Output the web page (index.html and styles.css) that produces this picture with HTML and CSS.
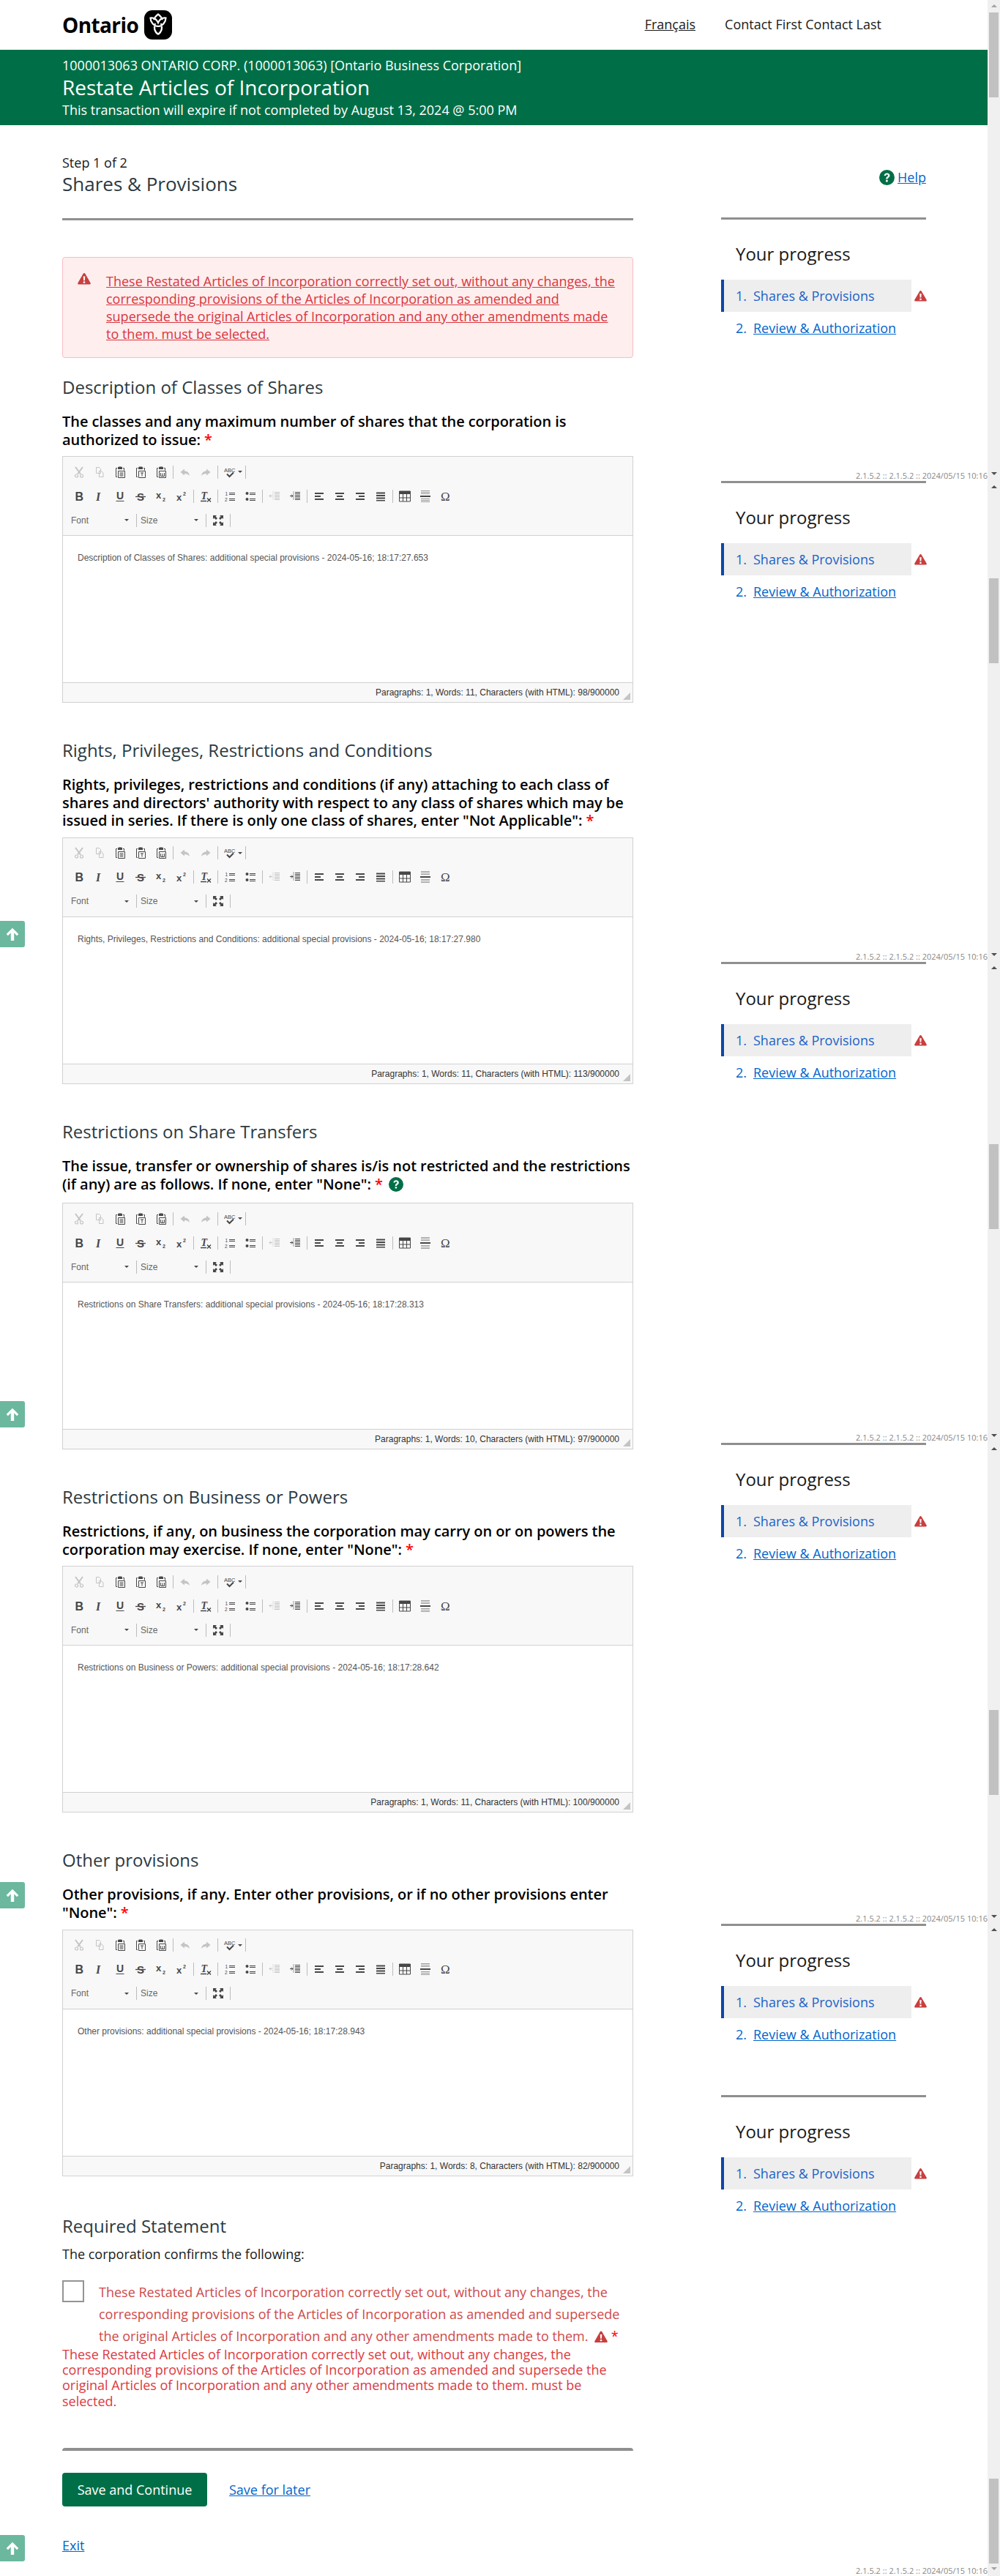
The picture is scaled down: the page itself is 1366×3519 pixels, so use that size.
FILE: index.html
```html
<!DOCTYPE html>
<html lang="en">

<head>
    <meta charset="UTF-8">
    <meta name="viewport" content="width=device-width, initial-scale=1.0">
    <title>Restate Articles of Incorporation</title>
    <link rel="stylesheet" href="styles.css">
</head>

<body>
    <!-- shared icons -->
    <svg class="sprite" aria-hidden="true">
        <symbol id="i-warn" viewBox="0 0 18 16">
            <path d="M9 .5c.6 0 1 .3 1.3.8l7.3 12.6c.6 1-.1 2.1-1.3 2.1H1.7C.5 16-.2 14.900.4 13.900L7.700 1.300C8 .8 8.400.5 9 .5z" fill="#c93f3f" />
            <path d="M7.700 5h2.600l-.4 5.700H8.100zM7.800 12h2.400v2.300H7.800z" fill="#fff" />
        </symbol>
        <symbol id="i-help" viewBox="0 0 20 20">
            <circle cx="10" cy="10" r="10" fill="#006f47" />
            <path d="M6.400 7.600C6.500 5.500 8 4.300 10.100 4.300c2.200 0 3.700 1.300 3.700 3.100 0 1.500-.8 2.200-1.900 3-.7.500-.9.800-.9 1.600H8.800c0-1.500.4-2.200 1.400-2.900.8-.6 1.200-1 1.200-1.600 0-.7-.5-1.200-1.300-1.200-.9 0-1.400.5-1.500 1.300zM8.700 13.200h2.400v2.400H8.700z" fill="#fff" />
        </symbol>
        <symbol id="i-up" viewBox="0 0 18 18">
            <path d="M9 1.500l7.500 7.500-2 2L11 7.500V17H7V7.500L3.500 11l-2-2z" fill="#fff" />
        </symbol>

        <symbol id="t-cut" viewBox="0 0 16 16">
            <path d="M3 1l7 9.500M13 1L6 10.500" stroke="currentColor" stroke-width="2" fill="none" />
            <circle cx="4.500" cy="13" r="2" fill="none" stroke="currentColor" stroke-width="1.200" />
            <circle cx="11.500" cy="13" r="2" fill="none" stroke="currentColor" stroke-width="1.200" />
        </symbol>
        <symbol id="t-copy" viewBox="0 0 16 16">
            <path d="M3.500 1.500h4l2 2v6h-6zM7.500 6.500h3l2.500 2.500v5.500H7.500z" fill="#f7f7f7" stroke="currentColor" />
        </symbol>
        <symbol id="t-paste" viewBox="0 0 16 16">
            <path d="M4 2.500H2.500v12H4M12 2.500h1.500v3" fill="none" stroke="currentColor" />
            <path d="M5 1.500c0-.8 1.200-1 3-1s3 .2 3 1V4H5z" fill="currentColor" />
            <path d="M5.500 6.500h9v9h-9zM7.500 9h5M7.500 11h5M7.500 13h5" fill="none" stroke="currentColor" />
        </symbol>
        <symbol id="t-paste-text" viewBox="0 0 16 16">
            <path d="M4 2.500H2.500v12H4M12 2.500h1.500v3" fill="none" stroke="currentColor" />
            <path d="M5 1.500c0-.8 1.200-1 3-1s3 .2 3 1V4H5z" fill="currentColor" />
            <path d="M5.500 6.500h9v9h-9zM8 9h4M10 9v4.500" fill="none" stroke="currentColor" />
        </symbol>
        <symbol id="t-paste-word" viewBox="0 0 16 16">
            <path d="M4 2.500H2.500v12H4M12 2.500h1.500v3" fill="none" stroke="currentColor" />
            <path d="M5 1.500c0-.8 1.200-1 3-1s3 .2 3 1V4H5z" fill="currentColor" />
            <path d="M5.500 6.500h9v9h-9zM7.500 9v4.500h5V9M10 9.500v4" fill="none" stroke="currentColor" />
        </symbol>
        <symbol id="t-undo" viewBox="0 0 16 16">
            <path d="M7 3.500L1.500 8 7 12.500V10c3 0 5 .8 7 3-.5-4-3-6.500-7-6.800z" fill="currentColor" />
        </symbol>
        <symbol id="t-redo" viewBox="0 0 16 16">
            <path d="M9 3.500L14.500 8 9 12.500V10c-3 0-5 .8-7 3 .5-4 3-6.500 7-6.800z" fill="currentColor" />
        </symbol>
        <symbol id="t-spell" viewBox="0 0 16 16">
            <text class="tb-glyph" x="0" y="7.500" font-size="7.500">ABC</text>
            <path d="M4 10.500l3.500 3.500 5.500-5.500" fill="none" stroke="currentColor" stroke-width="2" />
        </symbol>
        <symbol id="t-bold" viewBox="0 0 16 16">
            <text class="tb-glyph" x="2.500" y="14" font-size="16" font-weight="700">B</text>
        </symbol>
        <symbol id="t-italic" viewBox="0 0 16 16">
            <text class="tb-glyph tb-glyph-serif" x="3" y="14" font-size="16" font-weight="700" font-style="italic">I</text>
        </symbol>
        <symbol id="t-underline" viewBox="0 0 16 16">
            <text class="tb-glyph" x="3" y="12" font-size="14" font-weight="700">U</text>
            <path d="M2.500 14.500h11" stroke="currentColor" />
        </symbol>
        <symbol id="t-strike" viewBox="0 0 16 16">
            <text class="tb-glyph" x="3" y="14" font-size="15" font-weight="700">S</text>
            <path d="M1 8.500h14" stroke="currentColor" stroke-width="1.300" />
        </symbol>
        <symbol id="t-sub" viewBox="0 0 16 16">
            <text class="tb-glyph" x="1" y="11" font-size="13" font-weight="700">x</text>
            <text class="tb-glyph" x="10" y="15" font-size="7" font-weight="700">2</text>
        </symbol>
        <symbol id="t-sup" viewBox="0 0 16 16">
            <text class="tb-glyph" x="1" y="14" font-size="13" font-weight="700">x</text>
            <text class="tb-glyph" x="10" y="7" font-size="7" font-weight="700">2</text>
        </symbol>
        <symbol id="t-remove" viewBox="0 0 16 16">
            <text class="tb-glyph tb-glyph-serif" x="1.500" y="12" font-size="14" font-weight="700" font-style="italic">T</text>
            <path d="M1 14.500h8M10 10.500l5 5M15 10.500l-5 5" stroke="currentColor" stroke-width="1.400" />
        </symbol>
        <symbol id="t-ol" viewBox="0 0 16 16">
            <path d="M7 3.500h8M7 5.500h8M7 11.500h8M7 13.500h8" stroke="currentColor" />
            <text class="tb-glyph" x="1.500" y="7" font-size="6.500">1</text>
            <text class="tb-glyph" x="1" y="14.500" font-size="6.500">2</text>
        </symbol>
        <symbol id="t-ul" viewBox="0 0 16 16">
            <circle cx="3.500" cy="4" r="2" fill="currentColor" />
            <circle cx="3.500" cy="12" r="2" fill="currentColor" />
            <path d="M7 3.500h8M7 5.500h8M7 11.500h8M7 13.500h8" stroke="currentColor" />
        </symbol>
        <symbol id="t-outdent" viewBox="0 0 16 16">
            <path d="M8 2.500h7M8 4.500h7M8 6.500h7M8 8.500h7M8 10.500h7M8 12.500h7" stroke="currentColor" />
            <path d="M6 1.500v12" stroke="currentColor" stroke-dasharray="1 1" />
            <path d="M5 7.500H1M3 5.500l-2 2 2 2" stroke="currentColor" fill="none" />
        </symbol>
        <symbol id="t-indent" viewBox="0 0 16 16">
            <path d="M8 2.500h7M8 4.500h7M8 6.500h7M8 8.500h7M8 10.500h7M8 12.500h7" stroke="currentColor" />
            <path d="M6 1.500v12" stroke="currentColor" stroke-dasharray="1 1" />
            <path d="M1 7.500h4M3 5.500l2 2-2 2" stroke="currentColor" fill="none" />
        </symbol>
        <symbol id="t-left" viewBox="0 0 16 16">
            <path d="M2 3h12v2H2zM2 7h8v2H2zM2 11h12v2H2z" fill="currentColor" />
        </symbol>
        <symbol id="t-center" viewBox="0 0 16 16">
            <path d="M2 3h12v2H2zM4 7h8v2H4zM2 11h12v2H2z" fill="currentColor" />
        </symbol>
        <symbol id="t-right" viewBox="0 0 16 16">
            <path d="M2 3h12v2H2zM6 7h8v2H6zM2 11h12v2H2z" fill="currentColor" />
        </symbol>
        <symbol id="t-justify" viewBox="0 0 16 16">
            <path d="M2 2.500h12v2H2zM2 6h12v2H2zM2 9.500h12v2H2zM2 13h12v1.500H2z" fill="currentColor" />
        </symbol>
        <symbol id="t-table" viewBox="0 0 16 16">
            <path d="M.5 1h15v14H.5z" fill="none" stroke="currentColor" />
            <path d="M0 1h16v4H0z" fill="currentColor" />
            <path d="M5.500 5v10M10.500 5v10M0 10h16" stroke="currentColor" />
        </symbol>
        <symbol id="t-hr" viewBox="0 0 16 16">
            <path d="M2 .5h12M2 2.500h12M2 4.500h12M2 11.500h12M2 13.500h12M2 15.500h12" stroke="#999" />
            <path d="M1 7h14v2H1z" fill="currentColor" />
        </symbol>
        <symbol id="t-omega" viewBox="0 0 16 16">
            <text class="tb-glyph tb-glyph-serif" x="1" y="14" font-size="17">&#937;</text>
        </symbol>
        <symbol id="t-max" viewBox="0 0 16 16">
            <path d="M1 1h5L4.500 2.500 7 5 5 7 2.500 4.500 1 6zM15 1v5l-1.500-1.500L11 7 9 5l2.500-2.500L10 1zM1 15v-5l1.500 1.500L5 9l2 2-2.500 2.500L6 15zM15 15h-5l1.500-1.500L9 11l2-2 2.500 2.500L15 10z" fill="currentColor" />
        </symbol>
    </svg>

    <div class="viewport">
        <div class="site">
            <header class="site-header">
                <div class="logo">
                    <span class="logo-word">Ontario</span>
                    <svg class="logo-badge" viewBox="0 0 38 40">
                        <rect width="38" height="40" rx="11" fill="#000" />
                        <path d="M19 22C13 22 8.500 16 8.500 10.500 13 10 17 12.500 19 17c2-4.500 6-7 10.500-6.500C29.500 16 25 22 19 22zM19 33c-4-3-6.500-8-4-15M19 33c4-3 6.500-8 4-15M13 13c2-5 4-6 6-7.500 2 1.500 4 2.500 6 7.500" fill="none" stroke="#fff" stroke-width="2.200" />
                    </svg>
                </div>
                <nav class="site-nav">
                    <a href="#" class="lang-link">Français</a>
                    <span>Contact First Contact Last</span>
                </nav>
            </header>

            <div class="banner">
                <div class="banner-corp">1000013063 ONTARIO CORP. (1000013063) [Ontario Business Corporation]</div>
                <h1>Restate Articles of Incorporation</h1>
                <div class="banner-expiry">This transaction will expire if not completed by August 13, 2024 @ 5:00 PM</div>
            </div>

            <div class="layout">
                <main class="main-col">
                    <div class="step">Step 1 of 2</div>
                    <h2 class="step-title">Shares &amp; Provisions</h2>
                    <hr class="rule">

                    <div class="alert">
                        <svg class="alert-icon"><use href="#i-warn" /></svg>
                        <a href="#" class="alert-link">These Restated Articles of Incorporation correctly set out, without any changes, the corresponding provisions of the Articles of Incorporation as amended and supersede the original Articles of Incorporation and any other amendments made to them. must be selected.</a>
                    </div>

                    <section class="section">
                        <h3>Description of Classes of Shares</h3>
                        <label class="field-label">The classes and any maximum number of shares that the corporation is authorized to issue: <span class="req">*</span></label>
                        <div class="editor">
                            <div class="toolbar">
                                <div class="tb-row">
                                    <svg class="tb off"><use href="#t-cut" /></svg><svg class="tb off"><use href="#t-copy" /></svg><svg class="tb"><use href="#t-paste" /></svg><svg class="tb"><use href="#t-paste-text" /></svg><svg class="tb"><use href="#t-paste-word" /></svg><i class="tb-sep"></i>
                                    <svg class="tb off"><use href="#t-undo" /></svg><svg class="tb off"><use href="#t-redo" /></svg><i class="tb-sep"></i>
                                    <svg class="tb"><use href="#t-spell" /></svg><i class="tb-caret tb-caret-spell"></i><i class="tb-sep"></i>
                                </div>
                                <div class="tb-row">
                                    <svg class="tb"><use href="#t-bold" /></svg><svg class="tb"><use href="#t-italic" /></svg><svg class="tb"><use href="#t-underline" /></svg><svg class="tb"><use href="#t-strike" /></svg><svg class="tb"><use href="#t-sub" /></svg><svg class="tb"><use href="#t-sup" /></svg><i class="tb-sep"></i>
                                    <svg class="tb"><use href="#t-remove" /></svg><i class="tb-sep"></i>
                                    <svg class="tb"><use href="#t-ol" /></svg><svg class="tb"><use href="#t-ul" /></svg><i class="tb-sep"></i>
                                    <svg class="tb off"><use href="#t-outdent" /></svg><svg class="tb"><use href="#t-indent" /></svg><i class="tb-sep"></i>
                                    <svg class="tb"><use href="#t-left" /></svg><svg class="tb"><use href="#t-center" /></svg><svg class="tb"><use href="#t-right" /></svg><svg class="tb"><use href="#t-justify" /></svg><i class="tb-sep"></i>
                                    <svg class="tb"><use href="#t-table" /></svg><svg class="tb"><use href="#t-hr" /></svg><svg class="tb"><use href="#t-omega" /></svg>
                                </div>
                                <div class="tb-row">
                                    <span class="tb-combo">Font<i class="tb-caret"></i></span><i class="tb-sep"></i>
                                    <span class="tb-combo">Size<i class="tb-caret"></i></span><i class="tb-sep"></i>
                                    <svg class="tb"><use href="#t-max" /></svg><i class="tb-sep"></i>
                                </div>
                            </div>
                            <div class="editor-body">Description of Classes of Shares: additional special provisions - 2024-05-16; 18:17:27.653</div>
                            <div class="editor-status">Paragraphs: 1, Words: 11, Characters (with HTML): 98/900000<i class="resizer"></i></div>
                        </div>
                    </section>

                    <section class="section">
                        <h3>Rights, Privileges, Restrictions and Conditions</h3>
                        <label class="field-label">Rights, privileges, restrictions and conditions (if any) attaching to each class of shares and directors' authority with respect to any class of shares which may be issued in series. If there is only one class of shares, enter "Not Applicable": <span class="req">*</span></label>
                        <div class="editor">
                            <div class="toolbar">
                                <div class="tb-row">
                                    <svg class="tb off"><use href="#t-cut" /></svg><svg class="tb off"><use href="#t-copy" /></svg><svg class="tb"><use href="#t-paste" /></svg><svg class="tb"><use href="#t-paste-text" /></svg><svg class="tb"><use href="#t-paste-word" /></svg><i class="tb-sep"></i>
                                    <svg class="tb off"><use href="#t-undo" /></svg><svg class="tb off"><use href="#t-redo" /></svg><i class="tb-sep"></i>
                                    <svg class="tb"><use href="#t-spell" /></svg><i class="tb-caret tb-caret-spell"></i><i class="tb-sep"></i>
                                </div>
                                <div class="tb-row">
                                    <svg class="tb"><use href="#t-bold" /></svg><svg class="tb"><use href="#t-italic" /></svg><svg class="tb"><use href="#t-underline" /></svg><svg class="tb"><use href="#t-strike" /></svg><svg class="tb"><use href="#t-sub" /></svg><svg class="tb"><use href="#t-sup" /></svg><i class="tb-sep"></i>
                                    <svg class="tb"><use href="#t-remove" /></svg><i class="tb-sep"></i>
                                    <svg class="tb"><use href="#t-ol" /></svg><svg class="tb"><use href="#t-ul" /></svg><i class="tb-sep"></i>
                                    <svg class="tb off"><use href="#t-outdent" /></svg><svg class="tb"><use href="#t-indent" /></svg><i class="tb-sep"></i>
                                    <svg class="tb"><use href="#t-left" /></svg><svg class="tb"><use href="#t-center" /></svg><svg class="tb"><use href="#t-right" /></svg><svg class="tb"><use href="#t-justify" /></svg><i class="tb-sep"></i>
                                    <svg class="tb"><use href="#t-table" /></svg><svg class="tb"><use href="#t-hr" /></svg><svg class="tb"><use href="#t-omega" /></svg>
                                </div>
                                <div class="tb-row">
                                    <span class="tb-combo">Font<i class="tb-caret"></i></span><i class="tb-sep"></i>
                                    <span class="tb-combo">Size<i class="tb-caret"></i></span><i class="tb-sep"></i>
                                    <svg class="tb"><use href="#t-max" /></svg><i class="tb-sep"></i>
                                </div>
                            </div>
                            <div class="editor-body">Rights, Privileges, Restrictions and Conditions: additional special provisions - 2024-05-16; 18:17:27.980</div>
                            <div class="editor-status">Paragraphs: 1, Words: 11, Characters (with HTML): 113/900000<i class="resizer"></i></div>
                        </div>
                    </section>

                    <section class="section">
                        <h3>Restrictions on Share Transfers</h3>
                        <label class="field-label field-label-help">The issue, transfer or ownership of shares is/is not restricted and the restrictions (if any) are as follows. If none, enter "None": <span class="req">*</span> <svg class="label-help"><use href="#i-help" /></svg></label>
                        <div class="editor">
                            <div class="toolbar">
                                <div class="tb-row">
                                    <svg class="tb off"><use href="#t-cut" /></svg><svg class="tb off"><use href="#t-copy" /></svg><svg class="tb"><use href="#t-paste" /></svg><svg class="tb"><use href="#t-paste-text" /></svg><svg class="tb"><use href="#t-paste-word" /></svg><i class="tb-sep"></i>
                                    <svg class="tb off"><use href="#t-undo" /></svg><svg class="tb off"><use href="#t-redo" /></svg><i class="tb-sep"></i>
                                    <svg class="tb"><use href="#t-spell" /></svg><i class="tb-caret tb-caret-spell"></i><i class="tb-sep"></i>
                                </div>
                                <div class="tb-row">
                                    <svg class="tb"><use href="#t-bold" /></svg><svg class="tb"><use href="#t-italic" /></svg><svg class="tb"><use href="#t-underline" /></svg><svg class="tb"><use href="#t-strike" /></svg><svg class="tb"><use href="#t-sub" /></svg><svg class="tb"><use href="#t-sup" /></svg><i class="tb-sep"></i>
                                    <svg class="tb"><use href="#t-remove" /></svg><i class="tb-sep"></i>
                                    <svg class="tb"><use href="#t-ol" /></svg><svg class="tb"><use href="#t-ul" /></svg><i class="tb-sep"></i>
                                    <svg class="tb off"><use href="#t-outdent" /></svg><svg class="tb"><use href="#t-indent" /></svg><i class="tb-sep"></i>
                                    <svg class="tb"><use href="#t-left" /></svg><svg class="tb"><use href="#t-center" /></svg><svg class="tb"><use href="#t-right" /></svg><svg class="tb"><use href="#t-justify" /></svg><i class="tb-sep"></i>
                                    <svg class="tb"><use href="#t-table" /></svg><svg class="tb"><use href="#t-hr" /></svg><svg class="tb"><use href="#t-omega" /></svg>
                                </div>
                                <div class="tb-row">
                                    <span class="tb-combo">Font<i class="tb-caret"></i></span><i class="tb-sep"></i>
                                    <span class="tb-combo">Size<i class="tb-caret"></i></span><i class="tb-sep"></i>
                                    <svg class="tb"><use href="#t-max" /></svg><i class="tb-sep"></i>
                                </div>
                            </div>
                            <div class="editor-body">Restrictions on Share Transfers: additional special provisions - 2024-05-16; 18:17:28.313</div>
                            <div class="editor-status">Paragraphs: 1, Words: 10, Characters (with HTML): 97/900000<i class="resizer"></i></div>
                        </div>
                    </section>

                    <section class="section">
                        <h3>Restrictions on Business or Powers</h3>
                        <label class="field-label">Restrictions, if any, on business the corporation may carry on or on powers the corporation may exercise. If none, enter "None": <span class="req">*</span></label>
                        <div class="editor">
                            <div class="toolbar">
                                <div class="tb-row">
                                    <svg class="tb off"><use href="#t-cut" /></svg><svg class="tb off"><use href="#t-copy" /></svg><svg class="tb"><use href="#t-paste" /></svg><svg class="tb"><use href="#t-paste-text" /></svg><svg class="tb"><use href="#t-paste-word" /></svg><i class="tb-sep"></i>
                                    <svg class="tb off"><use href="#t-undo" /></svg><svg class="tb off"><use href="#t-redo" /></svg><i class="tb-sep"></i>
                                    <svg class="tb"><use href="#t-spell" /></svg><i class="tb-caret tb-caret-spell"></i><i class="tb-sep"></i>
                                </div>
                                <div class="tb-row">
                                    <svg class="tb"><use href="#t-bold" /></svg><svg class="tb"><use href="#t-italic" /></svg><svg class="tb"><use href="#t-underline" /></svg><svg class="tb"><use href="#t-strike" /></svg><svg class="tb"><use href="#t-sub" /></svg><svg class="tb"><use href="#t-sup" /></svg><i class="tb-sep"></i>
                                    <svg class="tb"><use href="#t-remove" /></svg><i class="tb-sep"></i>
                                    <svg class="tb"><use href="#t-ol" /></svg><svg class="tb"><use href="#t-ul" /></svg><i class="tb-sep"></i>
                                    <svg class="tb off"><use href="#t-outdent" /></svg><svg class="tb"><use href="#t-indent" /></svg><i class="tb-sep"></i>
                                    <svg class="tb"><use href="#t-left" /></svg><svg class="tb"><use href="#t-center" /></svg><svg class="tb"><use href="#t-right" /></svg><svg class="tb"><use href="#t-justify" /></svg><i class="tb-sep"></i>
                                    <svg class="tb"><use href="#t-table" /></svg><svg class="tb"><use href="#t-hr" /></svg><svg class="tb"><use href="#t-omega" /></svg>
                                </div>
                                <div class="tb-row">
                                    <span class="tb-combo">Font<i class="tb-caret"></i></span><i class="tb-sep"></i>
                                    <span class="tb-combo">Size<i class="tb-caret"></i></span><i class="tb-sep"></i>
                                    <svg class="tb"><use href="#t-max" /></svg><i class="tb-sep"></i>
                                </div>
                            </div>
                            <div class="editor-body">Restrictions on Business or Powers: additional special provisions - 2024-05-16; 18:17:28.642</div>
                            <div class="editor-status">Paragraphs: 1, Words: 11, Characters (with HTML): 100/900000<i class="resizer"></i></div>
                        </div>
                    </section>

                    <section class="section">
                        <h3>Other provisions</h3>
                        <label class="field-label">Other provisions, if any. Enter other provisions, or if no other provisions enter "None": <span class="req">*</span></label>
                        <div class="editor">
                            <div class="toolbar">
                                <div class="tb-row">
                                    <svg class="tb off"><use href="#t-cut" /></svg><svg class="tb off"><use href="#t-copy" /></svg><svg class="tb"><use href="#t-paste" /></svg><svg class="tb"><use href="#t-paste-text" /></svg><svg class="tb"><use href="#t-paste-word" /></svg><i class="tb-sep"></i>
                                    <svg class="tb off"><use href="#t-undo" /></svg><svg class="tb off"><use href="#t-redo" /></svg><i class="tb-sep"></i>
                                    <svg class="tb"><use href="#t-spell" /></svg><i class="tb-caret tb-caret-spell"></i><i class="tb-sep"></i>
                                </div>
                                <div class="tb-row">
                                    <svg class="tb"><use href="#t-bold" /></svg><svg class="tb"><use href="#t-italic" /></svg><svg class="tb"><use href="#t-underline" /></svg><svg class="tb"><use href="#t-strike" /></svg><svg class="tb"><use href="#t-sub" /></svg><svg class="tb"><use href="#t-sup" /></svg><i class="tb-sep"></i>
                                    <svg class="tb"><use href="#t-remove" /></svg><i class="tb-sep"></i>
                                    <svg class="tb"><use href="#t-ol" /></svg><svg class="tb"><use href="#t-ul" /></svg><i class="tb-sep"></i>
                                    <svg class="tb off"><use href="#t-outdent" /></svg><svg class="tb"><use href="#t-indent" /></svg><i class="tb-sep"></i>
                                    <svg class="tb"><use href="#t-left" /></svg><svg class="tb"><use href="#t-center" /></svg><svg class="tb"><use href="#t-right" /></svg><svg class="tb"><use href="#t-justify" /></svg><i class="tb-sep"></i>
                                    <svg class="tb"><use href="#t-table" /></svg><svg class="tb"><use href="#t-hr" /></svg><svg class="tb"><use href="#t-omega" /></svg>
                                </div>
                                <div class="tb-row">
                                    <span class="tb-combo">Font<i class="tb-caret"></i></span><i class="tb-sep"></i>
                                    <span class="tb-combo">Size<i class="tb-caret"></i></span><i class="tb-sep"></i>
                                    <svg class="tb"><use href="#t-max" /></svg><i class="tb-sep"></i>
                                </div>
                            </div>
                            <div class="editor-body">Other provisions: additional special provisions - 2024-05-16; 18:17:28.943</div>
                            <div class="editor-status">Paragraphs: 1, Words: 8, Characters (with HTML): 82/900000<i class="resizer"></i></div>
                        </div>
                    </section>

                    <section class="section section-required">
                        <h3>Required Statement</h3>
                        <p class="confirm-intro">The corporation confirms the following:</p>
                        <div class="confirm-row">
                            <span class="checkbox"></span>
                            <span class="confirm-text">These Restated Articles of Incorporation correctly set out, without any changes, the corresponding provisions of the Articles of Incorporation as amended and supersede the original Articles of Incorporation and any other amendments made to them. <svg class="inline-warn"><use href="#i-warn" /></svg> <span class="req">*</span></span>
                        </div>
                        <div class="field-error">These Restated Articles of Incorporation correctly set out, without any changes, the corresponding provisions of the Articles of Incorporation as amended and supersede the original Articles of Incorporation and any other amendments made to them. must be selected.</div>
                    </section>

                    <hr class="rule rule-end">

                    <div class="actions">
                        <button class="btn-primary">Save and Continue</button>
                        <a href="#">Save for later</a>
                    </div>
                    <a href="#" class="exit-link">Exit</a>
                </main>

                <aside class="side-col">
                    <div class="help-row">
                        <svg class="help-icon"><use href="#i-help" /></svg>
                        <a href="#">Help</a>
                    </div>

                    <div class="progress progress-a">
                        <hr class="rule side-rule">
                        <h2>Your progress</h2>
                        <div class="progress-item current"><span class="num">1.</span>Shares &amp; Provisions</div><svg class="progress-warn"><use href="#i-warn" /></svg>
                        <div class="progress-item"><span class="num">2.</span><a href="#">Review &amp; Authorization</a></div>
                        <div class="stamp">2.1.5.2 :: 2.1.5.2 :: 2024/05/15 10:16</div>
                    </div>
                    <div class="progress progress-b">
                        <hr class="rule side-rule">
                        <h2>Your progress</h2>
                        <div class="progress-item current"><span class="num">1.</span>Shares &amp; Provisions</div><svg class="progress-warn"><use href="#i-warn" /></svg>
                        <div class="progress-item"><span class="num">2.</span><a href="#">Review &amp; Authorization</a></div>
                        <div class="stamp">2.1.5.2 :: 2.1.5.2 :: 2024/05/15 10:16</div>
                    </div>
                    <div class="progress progress-b">
                        <hr class="rule side-rule">
                        <h2>Your progress</h2>
                        <div class="progress-item current"><span class="num">1.</span>Shares &amp; Provisions</div><svg class="progress-warn"><use href="#i-warn" /></svg>
                        <div class="progress-item"><span class="num">2.</span><a href="#">Review &amp; Authorization</a></div>
                        <div class="stamp">2.1.5.2 :: 2.1.5.2 :: 2024/05/15 10:16</div>
                    </div>
                    <div class="progress progress-b">
                        <hr class="rule side-rule">
                        <h2>Your progress</h2>
                        <div class="progress-item current"><span class="num">1.</span>Shares &amp; Provisions</div><svg class="progress-warn"><use href="#i-warn" /></svg>
                        <div class="progress-item"><span class="num">2.</span><a href="#">Review &amp; Authorization</a></div>
                        <div class="stamp">2.1.5.2 :: 2.1.5.2 :: 2024/05/15 10:16</div>
                    </div>
                    <div class="progress progress-c">
                        <hr class="rule side-rule">
                        <h2>Your progress</h2>
                        <div class="progress-item current"><span class="num">1.</span>Shares &amp; Provisions</div><svg class="progress-warn"><use href="#i-warn" /></svg>
                        <div class="progress-item"><span class="num">2.</span><a href="#">Review &amp; Authorization</a></div>
                    </div>
                    <div class="progress progress-b">
                        <hr class="rule side-rule">
                        <h2>Your progress</h2>
                        <div class="progress-item current"><span class="num">1.</span>Shares &amp; Provisions</div><svg class="progress-warn"><use href="#i-warn" /></svg>
                        <div class="progress-item"><span class="num">2.</span><a href="#">Review &amp; Authorization</a></div>
                        <div class="stamp">2.1.5.2 :: 2.1.5.2 :: 2024/05/15 10:16</div>
                    </div>
                </aside>
            </div>
        </div>

        <!-- back to top buttons, fixed in the real page -->
        <a href="#" class="to-top to-top-1"><svg><use href="#i-up" /></svg></a>
        <a href="#" class="to-top to-top-2"><svg><use href="#i-up" /></svg></a>
        <a href="#" class="to-top to-top-3"><svg><use href="#i-up" /></svg></a>
        <a href="#" class="to-top to-top-4"><svg><use href="#i-up" /></svg></a>

        <div class="scrollbar">
            <div class="sb-seg sb-seg-1"><i class="sb-arrow up faint"></i><i class="sb-thumb"></i><i class="sb-arrow down"></i></div>
            <div class="sb-seg sb-seg-2"><i class="sb-arrow up"></i><i class="sb-thumb"></i><i class="sb-arrow down"></i></div>
            <div class="sb-seg sb-seg-3"><i class="sb-arrow up"></i><i class="sb-thumb"></i><i class="sb-arrow down"></i></div>
            <div class="sb-seg sb-seg-4"><i class="sb-arrow up"></i><i class="sb-thumb"></i><i class="sb-arrow down"></i></div>
            <div class="sb-seg sb-seg-5"><i class="sb-arrow up"></i><i class="sb-thumb"></i><i class="sb-arrow down faint"></i></div>
        </div>
    </div>
</body>

</html>
```

FILE: styles.css
```css
* {
    box-sizing: border-box;
}

body {
    font-family: "Open Sans", sans-serif;
    font-size: 18px;
    line-height: 24px;
    color: #1a1a1a;
    background-color: #ffffff;
    margin: 0;
    overflow: hidden;
}

a {
    color: #0066cc;
}

.sprite {
    display: none;
}

.viewport {
    position: relative;
    display: flex;
    height: 3519px;
}

.site {
    flex: 1;
    min-width: 0;
}

/* header */

.site-header {
    display: flex;
    justify-content: space-between;
    align-items: center;
    height: 68px;
    padding: 0 145px 0 85px;
}

.logo {
    display: flex;
    align-items: center;
    gap: 8px;
}

.logo-word {
    font-size: 28px;
    font-weight: 700;
    letter-spacing: -0.6px;
    color: #000000;
}

.logo-badge {
    width: 38px;
    height: 40px;
}

.site-nav {
    display: flex;
    gap: 40px;
    margin-top: -2px;
}

.lang-link {
    color: #1a1a1a;
}

.banner {
    background-color: #006f47;
    color: #ffffff;
    padding: 9px 85px;
    height: 103px;
}

.banner h1 {
    font-size: 28px;
    font-weight: 400;
    line-height: 37px;
    margin: 0;
}

/* columns */

.layout {
    display: flex;
}

.main-col {
    width: 780px;
    margin-left: 85px;
}

.side-col {
    width: 364px;
    margin-left: 120px;
}

.step {
    margin-top: 39px;
}

.step-title {
    font-size: 26px;
    font-weight: 400;
    line-height: 34px;
    color: #2b3a42;
    margin: 0;
}

.rule {
    height: 3px;
    border: none;
    background-color: #8f8f8f;
    margin: 30px 0 0;
}

/* error summary */

.alert {
    display: flex;
    gap: 21px;
    margin: 50px 0 25px;
    padding: 20px;
    background-color: #feeeee;
    border: 1px solid #f9bcc5;
    border-radius: 4px;
}

.alert-icon {
    flex: none;
    width: 18px;
    height: 17px;
}

.alert-link {
    color: #d8363e;
}

/* form sections */

.section + .section {
    margin-top: 50px;
}

.section h3 {
    font-size: 24px;
    font-weight: 400;
    line-height: 30px;
    color: #2b3a42;
    margin: 0 0 20px;
}

.field-label {
    display: block;
    font-size: 20px;
    font-weight: 600;
    line-height: 24.6px;
    letter-spacing: -0.06px;
    color: #000000;
    margin-bottom: 10px;
}

.field-label-help {
    margin-bottom: 13px;
}

.req {
    color: #ff0000;
}

.label-help {
    width: 20px;
    height: 20px;
    vertical-align: -3px;
    margin-left: 3px;
}

/* rich text editor */

.editor {
    height: 337px;
    border: 1px solid #d1d1d1;
    font-family: "Liberation Sans", Arial, sans-serif;
    font-size: 12px;
    line-height: 14px;
    color: #555555;
    display: flex;
    flex-direction: column;
}

.toolbar {
    height: 108px;
    padding: 4px 8px;
    background-color: #f8f8f8;
    border-bottom: 1px solid #d1d1d1;
    color: #474747;
}

.tb-row {
    display: flex;
    align-items: center;
    height: 33px;
}

.tb {
    width: 16px;
    height: 16px;
    margin: 0 6px;
    color: #474747;
    flex: none;
}

.tb.off {
    color: #c4c4c4;
}

.tb-glyph {
    font-family: "Liberation Sans", Arial, sans-serif;
    fill: currentColor;
}

.tb-glyph-serif {
    font-family: "Liberation Serif", "Times New Roman", serif;
}

.tb-sep {
    width: 1px;
    height: 18px;
    margin: 0 2px;
    background-color: #bcbcbc;
    flex: none;
}

.tb-caret {
    width: 0;
    height: 0;
    border-left: 3px solid transparent;
    border-right: 3px solid transparent;
    border-top: 3px solid #474747;
    flex: none;
}

.tb-caret-spell {
    margin: 0 2px 0 -3px;
}

.tb-combo {
    display: flex;
    align-items: center;
    justify-content: space-between;
    width: 90px;
    padding: 0 8px 0 3px;
    color: #666666;
}

.editor-body {
    flex: 1;
    padding: 23px 20px;
    background-color: #ffffff;
}

.editor-status {
    position: relative;
    height: 27px;
    padding: 6px 18px 0;
    text-align: right;
    color: #333333;
    background-color: #f8f8f8;
    border-top: 1px solid #d1d1d1;
}

.resizer {
    position: absolute;
    right: 3px;
    bottom: 3px;
    width: 0;
    height: 0;
    border-left: 10px solid transparent;
    border-bottom: 10px solid #c4c4c4;
}

/* required statement */

.section-required {
    margin-top: 53px !important;
}

.section-required h3 {
    margin-bottom: 11px;
}

.confirm-intro {
    margin: 0 0 24px;
}

.confirm-row {
    display: flex;
    gap: 20px;
}

.checkbox {
    flex: none;
    width: 30px;
    height: 30px;
    border: 2px solid #949494;
}

.confirm-text {
    line-height: 30px;
    margin-top: 1px;
    color: #cf4a4a;
}

.inline-warn {
    width: 18px;
    height: 16px;
    vertical-align: -2px;
    margin-left: 4px;
}

.field-error {
    line-height: 21.33px;
    color: #dc3a42;
}

.rule-end {
    height: 4px;
    margin-top: 53px;
    border-radius: 4px 4px 0 0;
}

.actions {
    display: flex;
    align-items: center;
    gap: 30px;
    margin-top: 30px;
}

.btn-primary {
    width: 198px;
    height: 46px;
    font-family: inherit;
    font-size: 18px;
    font-weight: 500;
    color: #ffffff;
    background-color: #006f47;
    border: none;
    border-radius: 4px;
}

.exit-link {
    display: inline-block;
    margin-top: 41px;
}

/* progress sidebar */

.help-row {
    display: flex;
    justify-content: flex-end;
    align-items: center;
    gap: 4px;
    width: 280px;
    height: 22px;
    margin: 60px 0 44px;
}

.help-icon {
    width: 21px;
    height: 21px;
}

.progress {
    display: flex;
    flex-wrap: wrap;
    align-content: flex-start;
    position: relative;
}

.progress-a {
    height: 360px;
}

.progress-b {
    height: 657px;
}

.progress-c {
    height: 234px;
}

.side-rule {
    flex: 0 0 280px;
    margin: 0 84px 0 0;
}

.progress h2 {
    flex: 0 0 100%;
    font-size: 24px;
    font-weight: 400;
    line-height: 30px;
    margin: 32px 0 20px;
    padding-left: 20px;
}

.progress-item {
    flex: 0 0 260px;
    display: flex;
    align-items: center;
    height: 44px;
    padding-left: 20px;
    color: #0066cc;
}

.progress-item.current {
    padding-left: 16px;
    border-left: 4px solid #0d47a8;
    background-color: #eeeeee;
    color: #1a64c8;
}

.num {
    width: 24px;
}

.progress-warn {
    width: 17px;
    height: 16px;
    margin: 14px 80px 0 4px;
    flex: none;
}

.progress-item:not(.current) {
    margin-right: 100px;
}

.stamp {
    position: absolute;
    right: 0;
    bottom: 0;
    font-size: 11px;
    line-height: 14px;
    color: #888888;
}

/* back to top */

.to-top {
    position: absolute;
    left: 0;
    width: 34px;
    height: 36px;
    display: flex;
    align-items: center;
    justify-content: center;
    background-color: #6bb89f;
    border-radius: 0 3px 3px 0;
}

.to-top svg {
    width: 20px;
    height: 20px;
}

.to-top-1 {
    top: 1258px;
}

.to-top-2 {
    top: 1914px;
}

.to-top-3 {
    top: 2571px;
}

.to-top-4 {
    top: 3463px;
}

/* the page was captured in pieces, so the scrollbar repeats */

.scrollbar {
    flex: none;
    width: 17px;
    background-color: #f0f0f0;
}

.sb-seg {
    display: flex;
    flex-direction: column;
    align-items: center;
    height: 657px;
}

.sb-seg-5 {
    height: 891px;
}

.sb-arrow {
    flex: none;
    width: 0;
    height: 0;
    border-left: 4px solid transparent;
    border-right: 4px solid transparent;
}

.sb-arrow.up {
    margin: 6px 0 7px;
    border-bottom: 4px solid #505050;
}

.sb-arrow.down {
    margin: auto 0 8px;
    border-top: 4px solid #505050;
}

.sb-arrow.up.faint {
    border-bottom-color: #a3a3a3;
}

.sb-arrow.down.faint {
    border-top-color: #a3a3a3;
}

.sb-thumb {
    flex: none;
    width: 13px;
    height: 116px;
    background-color: #c1c1c1;
}

.sb-seg-2 .sb-thumb {
    margin-top: 116px;
}

.sb-seg-3 .sb-thumb {
    margin-top: 232px;
}

.sb-seg-4 .sb-thumb {
    margin-top: 348px;
}

.sb-seg-5 .sb-thumb {
    margin-top: 741px;
}
```
